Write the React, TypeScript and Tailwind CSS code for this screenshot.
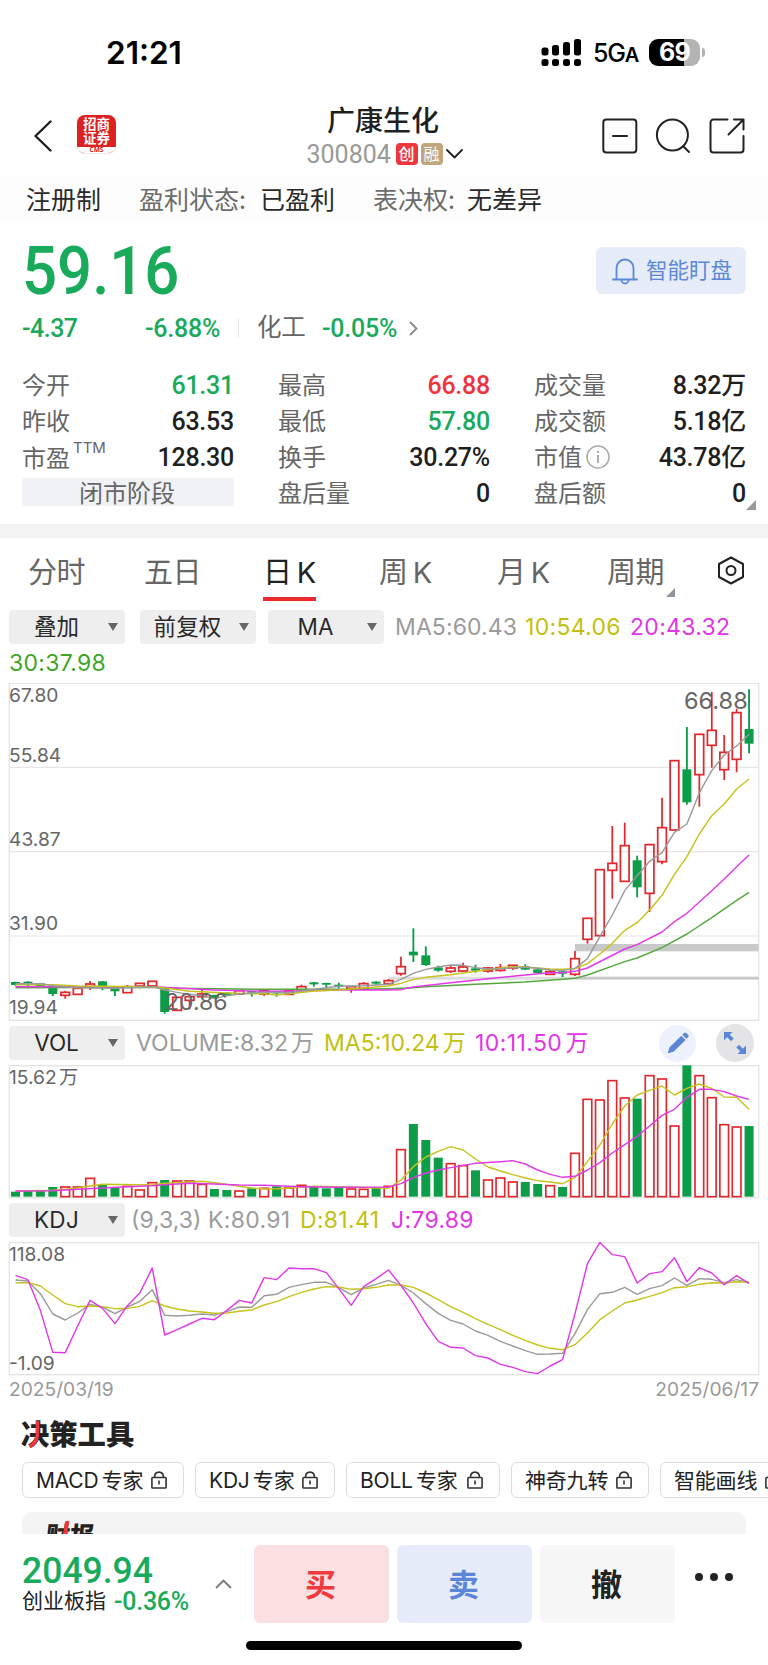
import React from 'react';

// [x step is the array index] high, body top, body bottom, low, up day
type Candle = [number, number, number, number, 0 | 1];

const candles: Candle[] = [
  [896, 897, 906, 908, 0], [895, 896, 902, 910, 0], [900, 901, 909, 910, 0], [912, 913, 933, 939, 0],
  [923, 928, 937, 947, 1], [916, 916, 934, 934, 1], [894, 903, 911, 921, 1], [894, 895, 915, 922, 0],
  [915, 916, 925, 939, 0], [906, 911, 929, 929, 1], [900, 901, 909, 916, 1], [895, 895, 909, 909, 1],
  [915, 916, 987, 992, 0], [943, 943, 982, 982, 1], [941, 941, 952, 979, 1], [921, 933, 941, 943, 1],
  [935, 936, 946, 947, 0], [928, 929, 936, 937, 0], [922, 923, 933, 934, 1], [923, 924, 929, 941, 0],
  [918, 922, 933, 939, 1], [924, 926, 931, 941, 0], [922, 923, 934, 934, 1], [905, 911, 921, 921, 1],
  [897, 898, 904, 911, 0], [899, 900, 905, 913, 0], [899, 905, 910, 916, 0], [910, 911, 918, 929, 1],
  [897, 902, 916, 916, 1], [895, 896, 902, 906, 0], [888, 893, 902, 902, 1], [821, 851, 872, 878, 1],
  [736, 806, 817, 837, 0], [790, 817, 846, 849, 0], [848, 853, 863, 866, 0], [848, 855, 865, 870, 1],
  [839, 852, 864, 866, 1], [845, 856, 863, 869, 0], [853, 855, 864, 869, 1], [843, 854, 862, 866, 1],
  [846, 847, 855, 861, 1], [844, 850, 860, 861, 0], [856, 859, 870, 871, 0], [861, 866, 874, 876, 1],
  [864, 865, 872, 882, 0], [804, 827, 874, 879, 1], [706, 706, 769, 782, 1], [560, 560, 758, 758, 1],
  [429, 541, 562, 647, 1], [419, 488, 595, 595, 1], [518, 532, 613, 643, 0], [482, 485, 631, 687, 1],
  [344, 434, 536, 544, 1], [233, 233, 441, 441, 1], [132, 259, 358, 365, 0], [154, 154, 275, 371, 1],
  [27, 142, 187, 254, 1], [156, 208, 260, 291, 1], [77, 89, 229, 268, 1], [19, 138, 182, 211, 0],
];

const volumes = [
  379, 377, 377, 365, 363, 363, 337, 359, 366, 361, 372, 350, 344, 345, 345, 355, 371, 374, 375, 369,
  367, 363, 366, 358, 363, 369, 367, 369, 370, 367, 361, 251, 176, 224, 277, 293, 299, 315, 342, 336,
  348, 350, 356, 359, 365, 262, 100, 102, 44, 96, 100, 29, 39, 180, 0, 29, 95, 176, 183, 182,
];

const priceLines: { color: string; pts: number[][] }[] = [
  {
    color: '#55a83f',
    pts: [[0, 914], [11, 913], [13, 916], [20, 919], [28, 919], [30, 917], [32, 914], [33, 911], [37, 904], [41, 897], [44, 889], [45, 886], [46, 876], [49, 836], [50, 825], [52, 794], [54, 753], [56, 704], [58, 652], [59, 628]],
  },
  {
    color: '#e03ae6',
    pts: [[0, 911], [11, 911], [13, 915], [16, 921], [20, 925], [23, 924], [26, 921], [30, 921], [31, 920], [32, 912], [35, 899], [38, 887], [41, 876], [43, 869], [44, 869], [45, 865], [46, 855], [49, 798], [50, 785], [52, 747], [53, 716], [54, 691], [56, 623], [57, 588], [58, 551], [59, 516]],
  },
  {
    color: '#c6c31c',
    pts: [[0, 905], [3, 905], [5, 909], [11, 911], [12, 915], [14, 925], [17, 930], [19, 932], [20, 932], [21, 936], [22, 932], [24, 924], [26, 921], [28, 915], [30, 909], [31, 901], [32, 889], [33, 883], [35, 875], [37, 865], [39, 855], [40, 851], [41, 852], [42, 855], [43, 858], [44, 859], [45, 857], [46, 842], [47, 813], [48, 781], [49, 742], [50, 719], [51, 681], [52, 637], [53, 574], [54, 521], [55, 453], [56, 398], [57, 363], [58, 318], [59, 288]],
  },
  {
    color: '#9b9b9b',
    pts: [[0, 902], [2, 902], [3, 908], [5, 914], [8, 916], [11, 911], [12, 921], [13, 928], [14, 934], [15, 938], [16, 947], [17, 938], [18, 933], [19, 930], [20, 928], [22, 929], [23, 924], [24, 919], [25, 914], [26, 910], [27, 909], [28, 908], [30, 904], [31, 889], [32, 871], [33, 859], [34, 852], [35, 846], [36, 847], [37, 854], [38, 858], [39, 857], [40, 854], [41, 853], [42, 856], [43, 861], [44, 863], [45, 856], [46, 827], [47, 761], [48, 696], [49, 623], [50, 578], [51, 535], [52, 509], [53, 448], [54, 423], [55, 329], [56, 263], [57, 216], [58, 189], [59, 154]],
  },
];

const volLines: { color: string; pts: number[][] }[] = [
  {
    color: '#c6c31c',
    pts: [[0, 377], [3, 375], [4, 372], [5, 368], [6, 362], [7, 357], [10, 358], [11, 359], [12, 354], [13, 352], [14, 350], [15, 348], [16, 352], [17, 357], [18, 363], [19, 368], [20, 371], [21, 370], [22, 368], [24, 363], [27, 365], [29, 368], [30, 369], [31, 344], [32, 304], [33, 275], [34, 258], [35, 244], [36, 254], [37, 281], [38, 305], [39, 317], [40, 328], [41, 338], [42, 346], [43, 350], [44, 355], [45, 337], [46, 289], [47, 239], [48, 176], [49, 122], [50, 89], [51, 75], [52, 62], [53, 89], [54, 69], [55, 56], [56, 69], [57, 95], [58, 96], [59, 132]],
  },
  {
    color: '#e03ae6',
    pts: [[0, 377], [3, 376], [5, 372], [7, 368], [9, 364], [11, 361], [12, 358], [14, 354], [16, 356], [18, 359], [20, 360], [23, 364], [26, 366], [30, 365], [31, 355], [32, 337], [33, 323], [34, 314], [35, 307], [36, 300], [37, 294], [39, 289], [40, 286], [41, 296], [42, 314], [43, 327], [44, 336], [45, 333], [46, 314], [47, 292], [48, 263], [49, 238], [50, 213], [51, 182], [52, 150], [53, 132], [54, 96], [55, 72], [56, 72], [57, 79], [58, 92], [59, 102]],
  },
];

const kdj = [
  {
    color: '#9b9b9b',
    ys: [809, 812, 850, 911, 929, 908, 882, 890, 910, 890, 873, 838, 915, 917, 915, 911, 914, 904, 890, 891, 856, 852, 831, 823, 816, 816, 832, 853, 833, 822, 810, 825, 848, 880, 909, 930, 941, 962, 975, 993, 1007, 1021, 1032, 1031, 1029, 970, 898, 850, 846, 831, 852, 835, 826, 803, 825, 805, 807, 817, 808, 817],
  },
  {
    color: '#c6c31c',
    ys: [817, 817, 827, 854, 880, 889, 887, 889, 895, 894, 888, 871, 887, 896, 902, 905, 909, 908, 903, 899, 884, 874, 859, 846, 836, 829, 830, 837, 835, 831, 824, 824, 831, 848, 868, 889, 906, 925, 942, 958, 975, 990, 1004, 1014, 1018, 1003, 968, 928, 902, 878, 869, 858, 847, 832, 829, 822, 817, 818, 814, 815],
  },
  {
    color: '#e03ae6',
    ys: [795, 808, 900, 1026, 1027, 947, 870, 894, 940, 886, 848, 773, 974, 958, 941, 924, 928, 900, 870, 878, 802, 808, 773, 775, 775, 787, 835, 885, 829, 805, 779, 825, 878, 940, 993, 1011, 1013, 1036, 1043, 1062, 1071, 1084, 1090, 1067, 1048, 910, 760, 696, 733, 739, 818, 790, 784, 742, 814, 772, 788, 823, 796, 820],
  },
];

const RED = '#e0282d';
const GREEN = '#0d9d49';
const xAt = (i: number) => 46.5 + i * 37.3;

function Line({ pts, color }: { pts: number[][]; color: string }) {
  return (
    <polyline
      points={pts.map(([i, y]) => `${xAt(i)},${y}`).join(' ')}
      fill="none"
      stroke={color}
      strokeWidth="4.3"
      strokeLinejoin="round"
    />
  );
}

function PriceChart() {
  return (
    <svg className="block h-[338px] w-full" viewBox="0 0 2304 1014">
      <rect x="28" y="1" width="2248" height="1011" fill="none" stroke="#e4e4e4" strokeWidth="4" />
      {[253, 506, 759].map((y) => (
        <line key={y} x1="28" x2="2276" y1={y} y2={y} stroke="#e6e6e6" strokeWidth="3.5" />
      ))}
      <rect x="1165" y="881" width="560" height="9" fill="#dcdcdc" />
      <rect x="1725" y="881" width="551" height="9" fill="#c9c9c9" />
      <rect x="1725" y="783" width="551" height="22" fill="#c9c9c9" />
      {candles.map(([high, top, bottom, low, up], i) => {
        const x = xAt(i);
        return up ? (
          <g key={i} stroke={RED} strokeWidth="5.2" fill="none">
            <path d={`M${x} ${high}V${top}M${x} ${bottom}V${low}`} />
            <rect x={x - 13} y={top} width="26" height={bottom - top} />
          </g>
        ) : (
          <g key={i} fill={GREEN}>
            <rect x={x - 2.8} y={high} width="5.6" height={low - high} />
            <rect x={x - 13.5} y={top} width="27" height={bottom - top} />
          </g>
        );
      })}
      {priceLines.map((l) => (
        <Line key={l.color} {...l} />
      ))}
    </svg>
  );
}

function VolumeChart() {
  return (
    <svg className="block h-[134px] w-full" viewBox="0 0 2304 402">
      <rect x="28" y="2" width="2248" height="396" fill="none" stroke="#e4e4e4" strokeWidth="4" />
      {volumes.map((v, i) =>
        candles[i][4] ? (
          <rect key={i} x={xAt(i) - 13} y={v + 3} width="26" height={392 - v} fill="none" stroke={RED} strokeWidth="5" />
        ) : (
          <rect key={i} x={xAt(i) - 13.5} y={v + 1} width="27" height={394 - v} fill={GREEN} />
        ),
      )}
      {volLines.map((l) => (
        <Line key={l.color} color={l.color} pts={l.pts.map(([i, y]) => [i, y + 1])} />
      ))}
    </svg>
  );
}

function KdjChart() {
  return (
    <svg className="block h-[134px] w-full" viewBox="0 0 2304 402">
      <rect x="28" y="2" width="2248" height="396" fill="none" stroke="#e4e4e4" strokeWidth="4" />
      {kdj.map((l) => (
        <Line key={l.color} color={l.color} pts={l.ys.map((y, i) => [i, y - 695])} />
      ))}
    </svg>
  );
}

function StatusBar() {
  return (
    <div className="flex h-[100px] items-center pt-1 text-black">
      <span className="ml-[106px] w-[435px] pt-[2px] font-[Inter] text-[31.5px] leading-none font-semibold">21:21</span>
      <svg className="h-[27px] w-[40px]" viewBox="0 0 40 27">
        <rect x="0.5" y="8.5" width="7" height="8" rx="2.5" />
        <rect x="11" y="6" width="7" height="10.5" rx="2.5" />
        <rect x="22" y="3" width="7" height="13.5" rx="2.5" />
        <rect x="33" y="0" width="7" height="16.5" rx="2.5" />
        {[0.5, 11, 22, 33].map((x) => (
          <rect key={x} x={x} y="20" width="7" height="7" rx="2.5" />
        ))}
      </svg>
      <span className="ml-[12px] w-[44px] pt-[3px] font-[Inter] text-[25px] leading-none font-medium tracking-[-1.2px] whitespace-nowrap">
        5G<span className="text-[20px] font-semibold">A</span>
      </span>
      <div className="ml-[12px] flex h-[27px] w-[51px] items-center justify-center rounded-[9px] bg-[linear-gradient(90deg,#000_69%,#b3b3b3_69%)] font-[Inter] text-[25px] leading-none font-bold tracking-[-0.8px] text-white">
        69
      </div>
      <div className="ml-[1.5px] h-[9px] w-[3px] rounded-r-full bg-[#b3b3b3]" />
    </div>
  );
}

function Header() {
  return (
    <div className="flex h-[75px] text-[#1f1f1f]">
      <svg className="mt-[20px] ml-[33px] h-[32px] w-[20px]" viewBox="0 0 20 32" fill="none" stroke="currentColor" strokeWidth="2.4" strokeLinecap="round" strokeLinejoin="round">
        <path d="M17.5 1.5 2.5 16l15 14.5" />
      </svg>
      <div className="mt-[15px] ml-[24px] h-[39px] w-[39px] overflow-hidden rounded-[8px] border-b border-[#ececec] bg-[#dd2020] text-center font-['Noto_Sans_CJK_SC',sans-serif] text-[13.5px] leading-[14px] font-bold text-white">
        <div className="pt-px">招商<br />证券</div>
        <div className="mt-[3px] h-[8px] bg-white font-['Open_Sans'] text-[6.5px] leading-[6px] font-bold text-[#dd2020]">CMS</div>
      </div>
      <div className="ml-[182px] flex w-[170px] flex-col items-center">
        <div className="mt-[5px] h-[28px] text-[28px] leading-[28px] font-medium whitespace-nowrap">广康生化</div>
        <div className="mt-[10px] ml-[3px] flex h-[22px] items-center">
          <span className="mr-[5px] w-[84px] font-[Roboto] text-[25px] leading-none text-[#999]">300804</span>
          <span className="mr-[3px] h-[22px] w-[22px] rounded-[4px] bg-[#ee363c] text-center text-[16px] leading-[21px] font-medium text-white">创</span>
          <span className="h-[22px] w-[22px] rounded-[4px] bg-[#c0a67e] text-center text-[16px] leading-[21px] text-white">融</span>
          <svg className="ml-[3px] h-[10px] w-[17px]" viewBox="0 0 17 10" fill="none" stroke="currentColor" strokeWidth="1.8" strokeLinecap="round" strokeLinejoin="round">
            <path d="m1 1 7.5 7.5L16 1" />
          </svg>
        </div>
      </div>
      <svg className="mt-[18px] ml-[134px] h-[36px] w-[144px] shrink-0" viewBox="0 0 144 36" fill="none" stroke="#222" strokeWidth="2" strokeLinecap="round" strokeLinejoin="round">
        <rect x="1.3" y="1.5" width="33" height="33" rx="3" />
        <path d="M11 18h14" />
        <circle cx="70.4" cy="17" r="15.5" />
        <path d="m81 28 6 6" />
        <path d="M125.500 1.500h-14a3 3 0 0 0-3 3v27a3 3 0 0 0 3 3h27a3 3 0 0 0 3-3v-13.500M132 1.500h9.500v10M141 2l-14.500 14.500" />
      </svg>
    </div>
  );
}

const info = [
  { w: 'w-[234px]', label: '盈利状态:', value: '已盈利', lw: 'w-[121px]' },
  { w: 'w-[200px]', label: '表决权:', value: '无差异', lw: 'w-[94px]' },
];

type Cell = { label: string; value: string; tone?: string; ttm?: boolean; tip?: boolean };

const quoteCols: Cell[][] = [
  [
    { label: '今开', value: '61.31', tone: 'text-[#1aaa5b]' },
    { label: '昨收', value: '63.53' },
    { label: '市盈', value: '128.30', ttm: true },
  ],
  [
    { label: '最高', value: '66.88', tone: 'text-[#f0343b]' },
    { label: '最低', value: '57.80', tone: 'text-[#1aaa5b]' },
    { label: '换手', value: '30.27%' },
    { label: '盘后量', value: '0' },
  ],
  [
    { label: '成交量', value: '8.32万' },
    { label: '成交额', value: '5.18亿' },
    { label: '市值', value: '43.78亿', tip: true },
    { label: '盘后额', value: '0' },
  ],
];

function Quote() {
  return (
    <div className="relative h-[303px] px-[22px]">
      <div className="flex h-[82px] items-end justify-between">
        <span className="-mb-px w-[300px] origin-left scale-x-[0.935] font-[Roboto] text-[66px] leading-[64px] font-medium text-[#1aaa5b]">59.16</span>
        <div className="mb-[9px] flex h-[47px] w-[150px] items-center rounded-[6px] bg-[#e6ecf8] pl-[15px] text-[21.5px] leading-none text-[#5c88da]">
          <svg className="mr-[7px] h-[28px] w-[28px]" viewBox="0 0 28 28" fill="none" stroke="currentColor" strokeWidth="1.8" strokeLinecap="round">
            <path d="M2 22.500h24M5.500 22.500V11a8.500 8.500 0 0 1 17 0v11.500M10.500 23a3.500 3.500 0 0 0 7 0" />
          </svg>
          <span className="-mt-[3px]">智能盯盘</span>
        </div>
      </div>
      <div className="mt-[9px] flex h-[32px] items-center font-[Roboto,'Noto_Sans_CJK_SC',sans-serif] text-[25px] leading-none font-medium tracking-[-0.2px] text-[#1aaa5b]">
        <span className="w-[123px] tracking-[-0.5px]">-4.37</span>
        <span className="w-[93px]">-6.88%</span>
        <span className="mr-[18px] h-[18px] w-px bg-[#e3e3e3]" />
        <span className="w-[65px] text-[24.5px] font-normal text-[#666]">化工</span>
        <span className="w-[87px]">-0.05%</span>
        <svg className="h-[15px] w-[9px]" viewBox="0 0 9 15" fill="none" stroke="#888" strokeWidth="1.8">
          <path d="m1 1 6.500 6.500L1 14" />
        </svg>
      </div>
      <div className="mt-[22px] flex justify-between pt-px">
        {quoteCols.map((col, c) => (
          <div key={c} className="w-[212px]">
            {col.map((cell) => (
              <div key={cell.label} className="flex h-[35.900px] items-center justify-between">
                <span className={cell.ttm ? 'flex items-center pt-px text-[24px] leading-none text-[#666]' : 'flex items-center pb-[2px] text-[24px] leading-none text-[#666]'}>
                  {cell.label}
                  {cell.ttm && <sup className="-mt-[5px] ml-[3px] font-[Inter] text-[15px] leading-none">TTM</sup>}
                  {cell.tip && (
                    <svg className="mt-[2px] ml-[4px] h-[24px] w-[24px]" viewBox="0 0 24 24" fill="none" stroke="#aaa" strokeWidth="1.500">
                      <circle cx="12" cy="12" r="11" />
                      <path d="M12 6v2M12 10v8" strokeWidth="2" />
                    </svg>
                  )}
                </span>
                <span className={`pt-px font-[Roboto,'Noto_Sans_CJK_SC',sans-serif] text-[25px] leading-none font-medium tracking-[-0.25px] ${cell.tone ?? 'text-[#1f1f1f]'}`}>
                  {cell.value}
                </span>
              </div>
            ))}
            {c === 0 && (
              <div className="mt-[3px] h-[28px] rounded-[3px] bg-[#f1f2f5] pr-[2px] text-center text-[24px] leading-[27px] text-[#666]">闭市阶段</div>
            )}
          </div>
        ))}
      </div>
      <svg className="absolute right-[12px] bottom-[14px] h-[10px] w-[10px]" viewBox="0 0 10 10" fill="#999">
        <path d="M10 0v10H0z" />
      </svg>
    </div>
  );
}

const tabs = [
  { name: '分时', w: 'w-[116px]' },
  { name: '五日', w: 'w-[119px]' },
  { name: '日 K', w: 'w-[116px]', active: true },
  { name: '周 K', w: 'w-[118px]' },
  { name: '月 K', w: 'w-[110px]' },
  { name: '周期', w: 'w-[110px]', more: true },
];

function Tabs() {
  return (
    <div className="flex h-[66px] items-start pt-[18px] pl-[28px] font-[Inter,'Noto_Sans_CJK_SC',sans-serif] text-[29px] leading-[33px] text-[#666]">
      {tabs.map((t) => (
        <div key={t.name} className={`${t.w} relative tracking-[-0.5px] whitespace-nowrap [word-spacing:-2.500px] ${t.active ? 'text-[#222]' : ''}`}>
          {t.name}
          {t.active && <div className="mt-[8px] h-[4px] w-[53px] bg-[#ee2a2e]" />}
          {t.more && (
            <svg className="absolute top-[32px] left-[59px] h-[9px] w-[9px]" viewBox="0 0 10 10" fill="#8e949c">
              <path d="M10 0v10H0z" />
            </svg>
          )}
        </div>
      ))}
      <svg className="h-[30px] w-[28px]" viewBox="0 0 28 30" fill="none" stroke="#222" strokeWidth="2" strokeLinejoin="round">
        <path d="M14 1.500 26 8v13l-12 6.500L2 21V8z" />
        <circle cx="14" cy="14.500" r="4.500" />
      </svg>
    </div>
  );
}

function Select({ label }: { label: string }) {
  return (
    <div className="relative h-[34px] w-[116px] shrink-0 rounded-[4px] bg-[#eee] pr-[21px] text-center font-[Inter,'Noto_Sans_CJK_SC',sans-serif] text-[22.500px] leading-[34px] text-[#2a2a2a]">
      {label}
      <svg className="absolute top-[13px] right-[7.500px] h-[8px] w-[10px]" viewBox="0 0 10 8" fill="#666">
        <path d="M0 0h10L5 8z" />
      </svg>
    </div>
  );
}

function DrawTools() {
  return (
    <div className="ml-auto flex items-center gap-[20px] pr-[14px]">
      <div className="flex h-[37px] w-[37px] items-center justify-center rounded-full bg-[#ecf1fb]">
        <svg className="h-[22px] w-[22px]" viewBox="0 0 22 22" fill="#5b86d8">
          <path d="m0.800 21.200 1.600-5.600L14.300 3.700l4.200 4.200L6.500 19.800zM15.300 2.700l1.800-1.800a1.400 1.400 0 0 1 2 0l2.100 2.100a1.400 1.400 0 0 1 0 2l-1.800 1.800z" />
        </svg>
      </div>
      <div className="flex h-[38px] w-[38px] items-center justify-center rounded-full bg-[#e4e4e6]">
        <svg className="h-[22px] w-[22px]" viewBox="0 0 22 22" fill="#5b86d8">
          <path d="M0 0h8.500L5.800 2.700l3.900 3.900-2.600 2.600-4-3.900L0 8.500zM22 22h-8.500l2.700-2.700-3.900-3.900 2.600-2.600 4 3.900L22 13.500z" />
        </svg>
      </div>
    </div>
  );
}

function Lock() {
  return (
    <svg className="h-[18px] w-[16px]" viewBox="0 0 16 18" fill="none" stroke="#333" strokeWidth="1.600">
      <rect x="0.900" y="6.500" width="14.200" height="10.500" rx="0.800" />
      <path d="M3.500 6.500C3.500 3 5 1.100 8 1.100s4.500 1.900 4.500 5.400M8 9.500v4" />
    </svg>
  );
}

const chips = [
  { text: 'MACD 专家', w: 'w-[162px]' },
  { text: 'KDJ 专家', w: 'w-[140px]' },
  { text: 'BOLL 专家', w: 'w-[154px]' },
  { text: '神奇九转', w: 'w-[138px]' },
  { text: '智能画线', w: 'w-[138px]' },
];

function BottomBar() {
  return (
    <div className="h-[131px] bg-white pt-[11px]">
      <div className="flex h-[78px]">
        <div className="ml-[22px] w-[193px] pt-[9px] whitespace-nowrap">
          <div className="origin-left scale-x-[0.96] font-[Roboto] text-[37px] leading-[34px] font-medium text-[#1aaa5b]">2049.94</div>
          <div className="flex h-[26px] items-center text-[21px] leading-none text-[#222]">
            <span className="w-[92px] pb-[3px]">创业板指</span>
            <span className="font-[Roboto] text-[25px] font-medium tracking-[-0.25px] text-[#1aaa5b]">-0.36%</span>
          </div>
        </div>
        <svg className="mt-[34px] h-[10px] w-[17px]" viewBox="0 0 17 10" fill="none" stroke="#777" strokeWidth="1.800">
          <path d="m1 9 7.500-7.500L16 9" />
        </svg>
        <div className="ml-[22px] flex gap-[8px] text-center text-[31px] leading-[76px] font-bold">
          <div className="h-[78px] w-[135px] rounded-[6px] bg-[#fbdfe1] pr-[2px] text-[#ef3a40]">买</div>
          <div className="h-[78px] w-[135px] rounded-[6px] bg-[#e5ebf8] pr-[2px] text-[#5b86d8]">卖</div>
          <div className="h-[78px] w-[135px] rounded-[6px] bg-[#f6f6f6] pr-[2px] text-[#222]">撤</div>
        </div>
        <div className="mt-[28px] ml-[20px] flex gap-[7px]">
          <i className="h-[8px] w-[8px] rounded-full bg-[#222]" />
          <i className="h-[8px] w-[8px] rounded-full bg-[#222]" />
          <i className="h-[8px] w-[8px] rounded-full bg-[#222]" />
        </div>
      </div>
      <div className="mt-[18px] ml-[246px] h-[9px] w-[276px] rounded-full bg-black" />
    </div>
  );
}

export default function App() {
  return (
    <div className="h-[1665px] w-[768px] overflow-hidden bg-white font-['Noto_Sans_CJK_SC',sans-serif]">
      <StatusBar />
      <Header />
      <div className="flex h-[46px] items-center bg-[#fdfdfd] pl-[26px] text-[25px] leading-none whitespace-nowrap text-[#2a2a2a]">
        <span className="w-[113px]">注册制</span>
        {info.map((f) => (
          <div key={f.label} className={`flex ${f.w}`}>
            <span className={`${f.lw} text-[#6b6b6b]`}>{f.label}</span>
            <span>{f.value}</span>
          </div>
        ))}
      </div>
      <Quote />
      <div className="h-[14px] bg-[#f3f3f3]" />
      <Tabs />
      <div className="mt-[6px] flex h-[34px] items-center pl-[9px] font-[Inter] text-[23px] leading-none tracking-[0.1px] whitespace-nowrap">
        <Select label="叠加" />
        <div className="ml-[15px]"><Select label="前复权" /></div>
        <div className="mr-[11px] ml-[12px]"><Select label="MA" /></div>
        <span className="w-[130px] text-[#9b9b9b]">MA5:60.43</span>
        <span className="w-[105px] tracking-[0.3px] text-[#c2bf10]">10:54.06</span>
        <span className="tracking-[0.3px] text-[#e235e6]">20:43.32</span>
      </div>
      <div className="h-[39px] pt-[7px] pl-[9px] font-[Inter] text-[23px] leading-[24px] tracking-[0.3px] text-[#40a528]">30:37.98</div>
      <div className="relative font-[Inter] text-[19.200px] leading-[20px] text-[#666]">
        <PriceChart />
        <span className="absolute top-[2px] left-[9px]">67.80</span>
        <span className="absolute top-[62px] left-[9px]">55.84</span>
        <span className="absolute top-[146px] left-[9px]">43.87</span>
        <span className="absolute top-[230px] left-[9px]">31.90</span>
        <span className="absolute top-[314px] left-[9px]">19.94</span>
        <span className="absolute top-[8px] left-[684px] text-[23.500px]">66.88</span>
        <span className="absolute top-[309px] left-[165px] text-[23px]">20.86</span>
      </div>
      <div className="mt-[3px] flex h-[38px] items-center pl-[9px] font-[Inter,'Noto_Sans_CJK_SC',sans-serif] text-[23px] leading-none whitespace-nowrap [word-spacing:-3.500px]">
        <Select label="VOL" />
        <span className="ml-[11px] w-[188px] text-[#9b9b9b]">VOLUME:8.32 万</span>
        <span className="w-[151px] text-[#c2bf10]">MA5:10.24 万</span>
        <span className="tracking-[0.4px] text-[#e235e6]">10:11.50 万</span>
        <DrawTools />
      </div>
      <div className="relative mt-[3px] font-[Inter,'Noto_Sans_CJK_SC',sans-serif] text-[19.200px] leading-[20px] text-[#666]">
        <VolumeChart />
        <span className="absolute top-[2px] left-[9px] [word-spacing:-3px]">15.62 万</span>
      </div>
      <div className="mt-[4px] flex h-[34px] items-center pl-[9px] font-[Inter] text-[23px] leading-none tracking-[0.3px] whitespace-nowrap">
        <Select label="KDJ" />
        <span className="ml-[6px] w-[77px] tracking-normal text-[#9b9b9b]">(9,3,3)</span>
        <span className="w-[92px] text-[#9b9b9b]">K:80.91</span>
        <span className="w-[91px] text-[#c2bf10]">D:81.41</span>
        <span className="text-[#e235e6]">J:79.89</span>
      </div>
      <div className="relative mt-[5px] font-[Inter] text-[19.200px] leading-[20px] text-[#666]">
        <KdjChart />
        <span className="absolute top-[2px] left-[9px]">118.08</span>
        <span className="absolute top-[111px] left-[9px]">-1.09</span>
      </div>
      <div className="flex h-[36px] justify-between pt-[3px] pr-[9px] pl-[9px] font-[Inter] text-[19.200px] leading-[20px] text-[#999]">
        <span>2025/03/19</span>
        <span>2025/06/17</span>
      </div>
      <div className="relative ml-[21px] h-[50px] pt-[5px] text-[28.300px] leading-[32px] font-black text-[#222]">
        决策工具
        <svg className="absolute top-[9px] left-[8px] h-[27px] w-[11px]" viewBox="0 0 11 27" fill="none" stroke="#ee363c" strokeWidth="3.600">
          <path d="M8.500 0v12c0 7-2.500 11-8 13.500" />
        </svg>
      </div>
      <div className="flex h-[36px] gap-[11px] pl-[21.500px]">
        {chips.map((c) => (
          <div key={c.text} className={`${c.w} flex shrink-0 items-center justify-between rounded-[6px] border border-[#ddd] pr-[16px] pl-[13.500px] font-[Inter,'Noto_Sans_CJK_SC',sans-serif] text-[21px] leading-none tracking-[-0.2px] whitespace-nowrap text-[#222] [word-spacing:-2.500px]`}>
            {c.text}
            <Lock />
          </div>
        ))}
      </div>
      <div className="mx-[22px] mt-[14px] h-[22px] overflow-hidden rounded-t-[10px] bg-[#f4f4f4] pt-[9px] pl-[24px]">
        <div className="relative w-[60px] -skew-x-6 text-[24px] leading-[26px] font-black text-[#222]">
          财报
          <svg className="absolute top-0 left-[14px] h-[14px] w-[10px]" viewBox="0 0 10 14" stroke="#ee363c" strokeWidth="4">
            <path d="M6 0 5 14" />
          </svg>
        </div>
      </div>
      <BottomBar />
    </div>
  );
}
